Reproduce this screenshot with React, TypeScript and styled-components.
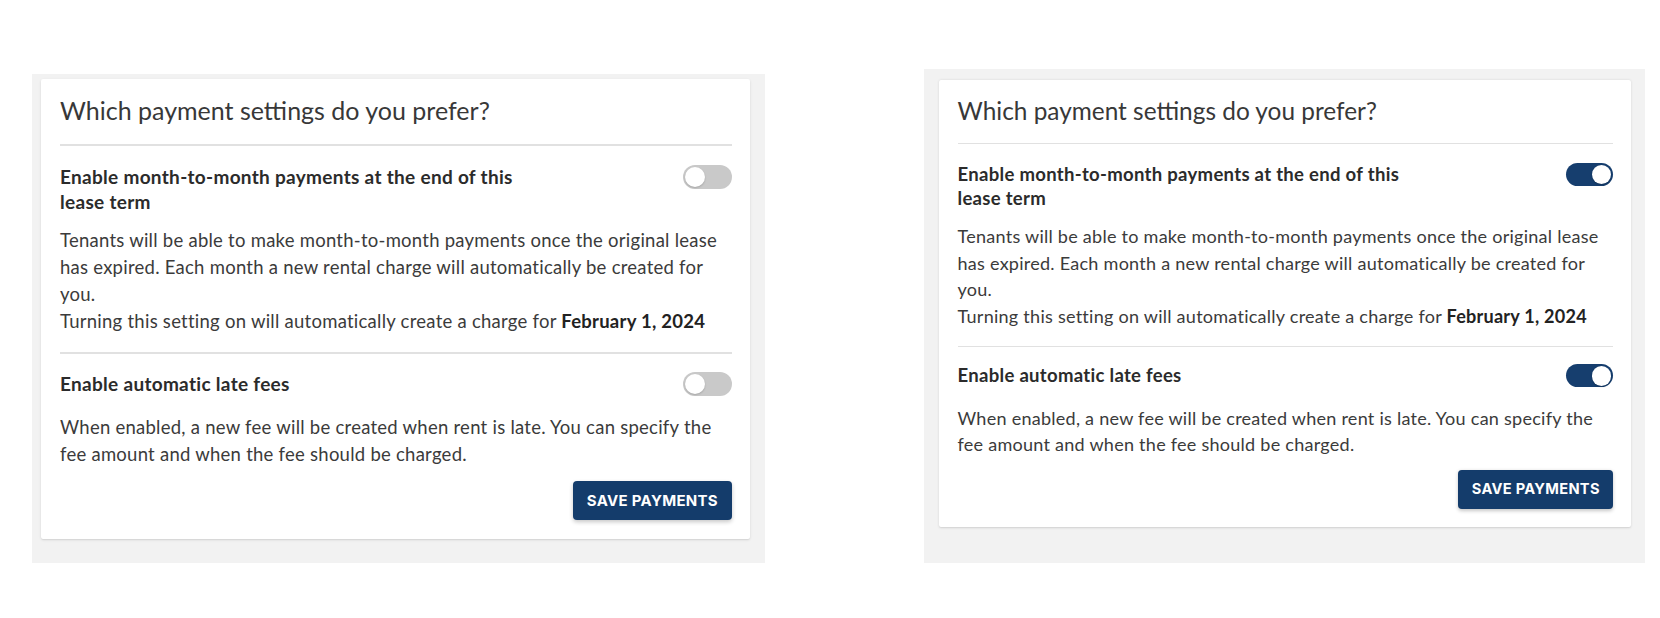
import React from "react";
import styled, { createGlobalStyle } from "styled-components";

const GlobalStyle = createGlobalStyle`
  html, body {
    margin: 0;
    padding: 0;
    background: #ffffff;
  }
  body {
    font-family: Lato, "Noto Sans", "Open Sans", sans-serif;
    -webkit-font-smoothing: antialiased;
  }
`;

const Page = styled.main`
  display: flex;
  align-items: flex-start;
  gap: 159px;
  padding: 69px 0 0 32px;
`;

const Panel = styled.section<{ $pad: string; $h: number; $top: number }>`
  box-sizing: border-box;
  height: ${(p) => p.$h}px;
  margin-top: ${(p) => p.$top}px;
  background: #f2f2f2;
  padding: ${(p) => p.$pad};
  display: flex;
  align-items: flex-start;
  flex: none;
`;

const Card = styled.div<{ $zoom: number }>`
  zoom: ${(p) => p.$zoom};
  width: 709px;
  box-sizing: border-box;
  background: #ffffff;
  padding: 15px 18px 19px 19px;
  border-radius: 2px;
  box-shadow: 0 1px 3px rgba(0, 0, 0, 0.1), 0 1px 1px rgba(0, 0, 0, 0.05);
`;

const Title = styled.h2`
  margin: 0;
  padding-bottom: 18px;
  border-bottom: 2px solid #e1e1e1;
  font-size: 25px;
  line-height: 32px;
  font-weight: 400;
  color: #383838;
`;

const Section = styled.div<{ $last?: boolean }>`
  padding: ${(p) => (p.$last ? "17px 0 0" : "18px 0 17px")};
  border-bottom: ${(p) => (p.$last ? "none" : "2px solid #e1e1e1")};
`;

const Row = styled.div`
  display: flex;
  justify-content: space-between;
  align-items: flex-start;
`;

const Heading = styled.h3`
  margin: 0;
  max-width: 490px;
  font-size: 19px;
  line-height: 25px;
  letter-spacing: 0.3px;
  font-weight: 700;
  color: #2b2b2b;
`;

const Switch = styled.span<{ $on: boolean }>`
  position: relative;
  flex: none;
  width: 49px;
  height: 24px;
  margin: 1px 0 5px;
  border-radius: 12px;
  background: ${(p) => (p.$on ? "#163e6e" : "#c9c9c9")};

  &::after {
    content: "";
    position: absolute;
    top: 2px;
    left: ${(p) => (p.$on ? "27px" : "2px")};
    width: 20px;
    height: 20px;
    border-radius: 50%;
    background: #ffffff;
    box-shadow: 0 1px 2px rgba(0, 0, 0, 0.18);
  }
`;

const Desc = styled.p`
  margin: 13px 0 0;
  font-size: 18.5px;
  line-height: 27px;
  letter-spacing: 0.25px;
  font-weight: 400;
  color: #3b3b3b;

  & strong {
    font-weight: 700;
    color: #222222;
  }
`;

const Line = styled.span`
  display: block;
  white-space: nowrap;
`;

const Footer = styled.div`
  display: flex;
  justify-content: flex-end;
  margin-top: 13px;
`;

const SaveButton = styled.button`
  height: 39px;
  padding: 0 14px;
  border: none;
  border-radius: 4px;
  background: #143c6b;
  color: #ffffff;
  font-family: Inter, Roboto, "Liberation Sans", sans-serif;
  font-size: 15px;
  font-weight: 700;
  letter-spacing: 0.3px;
  text-transform: uppercase;
  box-shadow: 0 2px 4px rgba(0, 0, 0, 0.22);
  cursor: pointer;
`;

function SettingsCard({ on, zoom }: { on: boolean; zoom: number }) {
  return (
    <Card $zoom={zoom}>
      <Title>Which payment settings do you prefer?</Title>
      <Section>
        <Row>
          <Heading>Enable month-to-month payments at the end of this lease term</Heading>
          <Switch role="switch" aria-checked={on} $on={on} />
        </Row>
        <Desc>
          <Line>Tenants will be able to make month-to-month payments once the original lease</Line>
          <Line>has expired. Each month a new rental charge will automatically be created for</Line>
          <Line>you.</Line>
          <Line>
            Turning this setting on will automatically create a charge for{" "}
            <strong>February 1, 2024</strong>
          </Line>
        </Desc>
      </Section>
      <Section $last>
        <Row>
          <Heading>Enable automatic late fees</Heading>
          <Switch role="switch" aria-checked={on} $on={on} />
        </Row>
        <Desc>
          <Line>When enabled, a new fee will be created when rent is late. You can specify the</Line>
          <Line>fee amount and when the fee should be charged.</Line>
        </Desc>
      </Section>
      <Footer>
        <SaveButton type="button">Save Payments</SaveButton>
      </Footer>
    </Card>
  );
}

export default function App() {
  return (
    <>
      <GlobalStyle />
      <Page>
        <Panel $pad="5px 15px 0 9px" $h={489} $top={5}>
          <SettingsCard on={false} zoom={1} />
        </Panel>
        <Panel $pad="11px 14px 0 15px" $h={494} $top={0}>
          <SettingsCard on={true} zoom={0.976} />
        </Panel>
      </Page>
    </>
  );
}
